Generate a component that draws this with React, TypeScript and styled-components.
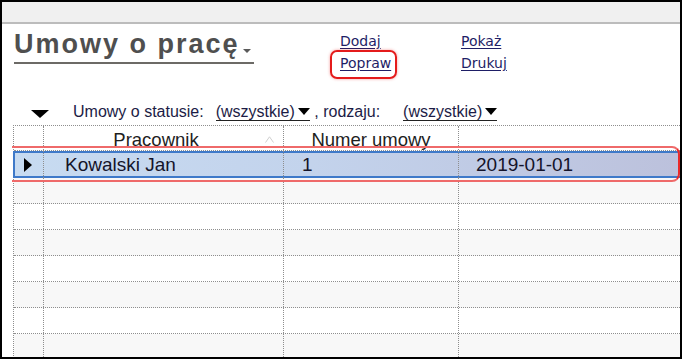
import React from 'react'
import styled, { createGlobalStyle } from 'styled-components'

const GlobalStyle = createGlobalStyle`
  html, body {
    margin: 0;
    padding: 0;
    background: #fff;
  }
  * {
    box-sizing: border-box;
  }
`

const Frame = styled.div`
  width: 682px;
  height: 359px;
  border: 2px solid #000;
  background: #fff;
  overflow: hidden;
  font-family: 'Liberation Sans', Arial, sans-serif;
`

const TopBar = styled.div`
  height: 22px;
  background: #f0f0f0;
  border-bottom: 2px solid #bcbcbc;
`

const Header = styled.div`
  display: grid;
  grid-template-columns: 326px 121px auto;
  align-items: start;
  padding-left: 12px;
`

const Title = styled.div`
  display: inline-flex;
  align-items: baseline;
  justify-self: start;
  margin-top: 7px;
  padding-bottom: 5px;
  padding-right: 3px;
  border-bottom: 2px solid #6c6a66;
  font-size: 27px;
  line-height: 26px;
  font-weight: bold;
  letter-spacing: 2px;
  color: #4f4f4f;
`

const TitleCaret = styled.span`
  display: inline-block;
  width: 0;
  height: 0;
  margin-left: 3px;
  vertical-align: 4px;
  border-left: 4.5px solid transparent;
  border-right: 4.5px solid transparent;
  border-top: 4px solid #5a5a5a;
`

const LinkColumn = styled.div`
  display: flex;
  flex-direction: column;
  align-items: flex-start;
  margin-top: 6px;
`

const ActionLink = styled.a<{ $marked?: boolean }>`
  position: relative;
  font-family: 'DejaVu Sans', Tahoma, sans-serif;
  font-size: 14px;
  line-height: 22px;
  color: #1e1e66;
  text-decoration: underline;
  text-underline-offset: 2px;
  cursor: pointer;

  &::after {
    content: '';
    display: ${({ $marked }) => ($marked ? 'block' : 'none')};
    position: absolute;
    left: -10px;
    right: -6px;
    top: -2px;
    bottom: -5px;
    border: 2px solid #e41b1b;
    border-radius: 7px;
    box-shadow: 0 0 3px rgba(230, 30, 30, 0.45);
  }
`

const FilterRow = styled.div`
  display: flex;
  align-items: baseline;
  height: 20px;
  margin-top: 28px;
  padding-left: 29px;
  font-size: 16px;
  line-height: 20px;
  color: #1c1c46;
`

const BigCaret = styled.span`
  display: inline-block;
  width: 0;
  height: 0;
  align-self: center;
  margin-top: 4px;
  margin-right: 24px;
  border-left: 9px solid transparent;
  border-right: 9px solid transparent;
  border-top: 8px solid #000;
`

const Label = styled.span<{ $gap?: number }>`
  margin-right: ${({ $gap }) => $gap ?? 0}px;
  white-space: pre;
`

const Chooser = styled.span`
  display: inline-block;
  line-height: 16px;
  border-bottom: 1px solid #222;
  color: #1c1c46;
  white-space: pre;
`

const SmallCaret = styled.span`
  display: inline-block;
  width: 0;
  height: 0;
  margin-left: 3px;
  vertical-align: 2px;
  border-left: 6px solid transparent;
  border-right: 6px solid transparent;
  border-top: 7px solid #000;
`

const Table = styled.div`
  margin-top: 3px;
  margin-left: 11px;
  border-left: 1px dotted #8e8e8e;
  border-top: 1px dotted #8e8e8e;
`

const Row = styled.div<{ $height: number; $shade?: boolean }>`
  position: relative;
  display: grid;
  grid-template-columns: 30px 240px 175px 1fr;
  height: ${({ $height }) => $height}px;
  background: ${({ $shade }) => ($shade ? '#f8f8f8' : '#fff')};
  border-bottom: 1px dotted #8e8e8e;
`

const SelectedRow = styled(Row)`
  border-bottom: none;
  background: linear-gradient(90deg, #c7dbf1 0%, #c3d3ec 45%, #bcc1dc 100%);
  box-shadow: inset 0 2px 0 #3e79c9, inset 0 -2px 0 #3e79c9, inset 2px 0 0 #3e79c9;
  margin-left: -1px;
  padding-left: 1px;
`

const RowMark = styled.div`
  position: absolute;
  z-index: 1;
  left: -1px;
  right: 0;
  top: -5px;
  bottom: -4px;
  border: 2px solid #ea2a2a;
  border-left: none;
  border-radius: 0 8px 8px 0;
  border-top-color: #ef6a6a;
  border-bottom-color: #ef6a6a;
  pointer-events: none;
`

const Cell = styled.div<{ $pad?: number }>`
  display: flex;
  align-items: center;
  padding-left: ${({ $pad }) => $pad ?? 0}px;
  border-right: 1px dotted #8e8e8e;
  font-size: 19px;
  color: #14142a;
  white-space: nowrap;
  overflow: hidden;

  &:nth-child(4) {
    border-right: none;
  }
`

const HeadCell = styled(Cell)<{ $sorted?: boolean }>`
  position: relative;
  justify-content: center;
  padding-right: ${({ $sorted }) => ($sorted ? 15 : 0)}px;
  padding-top: 4px;
  font-size: 18.5px;
  color: #1e1e1e;
`

const SortMark = styled.svg`
  position: absolute;
  right: 9px;
  top: 10px;
`

const RowArrow = styled.span`
  display: inline-block;
  width: 0;
  height: 0;
  margin-left: 10px;
  border-top: 7px solid transparent;
  border-bottom: 7px solid transparent;
  border-left: 8px solid #000;
`

const emptyRows = [true, false, true, false, true, false, true]

export default function App() {
  return (
    <>
      <GlobalStyle />
      <Frame>
        <TopBar />
        <Header>
          <Title>
            Umowy o pracę
            <TitleCaret />
          </Title>
          <LinkColumn>
            <ActionLink>Dodaj</ActionLink>
            <ActionLink $marked>Popraw</ActionLink>
          </LinkColumn>
          <LinkColumn>
            <ActionLink>Pokaż</ActionLink>
            <ActionLink>Drukuj</ActionLink>
          </LinkColumn>
        </Header>
        <FilterRow>
          <BigCaret />
          <Label $gap={12}>Umowy o statusie:</Label>
          <Chooser>
            (wszystkie)
            <SmallCaret />
          </Chooser>
          <Label $gap={23}> , rodzaju:</Label>
          <Chooser>
            (wszystkie)
            <SmallCaret />
          </Chooser>
        </FilterRow>
        <Table>
          <Row $height={25}>
            <HeadCell />
            <HeadCell $sorted>
              Pracownik
              <SortMark width="9" height="7" viewBox="0 0 9 7">
                <path d="M0.5 6.5 L4.5 0.8 L8.5 6.5" fill="none" stroke="#cfcfcf" strokeWidth="1" />
              </SortMark>
            </HeadCell>
            <HeadCell>Numer umowy</HeadCell>
            <HeadCell />
          </Row>
          <SelectedRow $height={27}>
            <Cell>
              <RowArrow />
            </Cell>
            <Cell $pad={21}>Kowalski Jan</Cell>
            <Cell $pad={18}>1</Cell>
            <Cell $pad={17}>2019-01-01</Cell>
            <RowMark />
          </SelectedRow>
          {emptyRows.map((shade, i) => (
            <Row key={i} $height={26} $shade={shade}>
              <Cell />
              <Cell />
              <Cell />
              <Cell />
            </Row>
          ))}
        </Table>
      </Frame>
    </>
  )
}
